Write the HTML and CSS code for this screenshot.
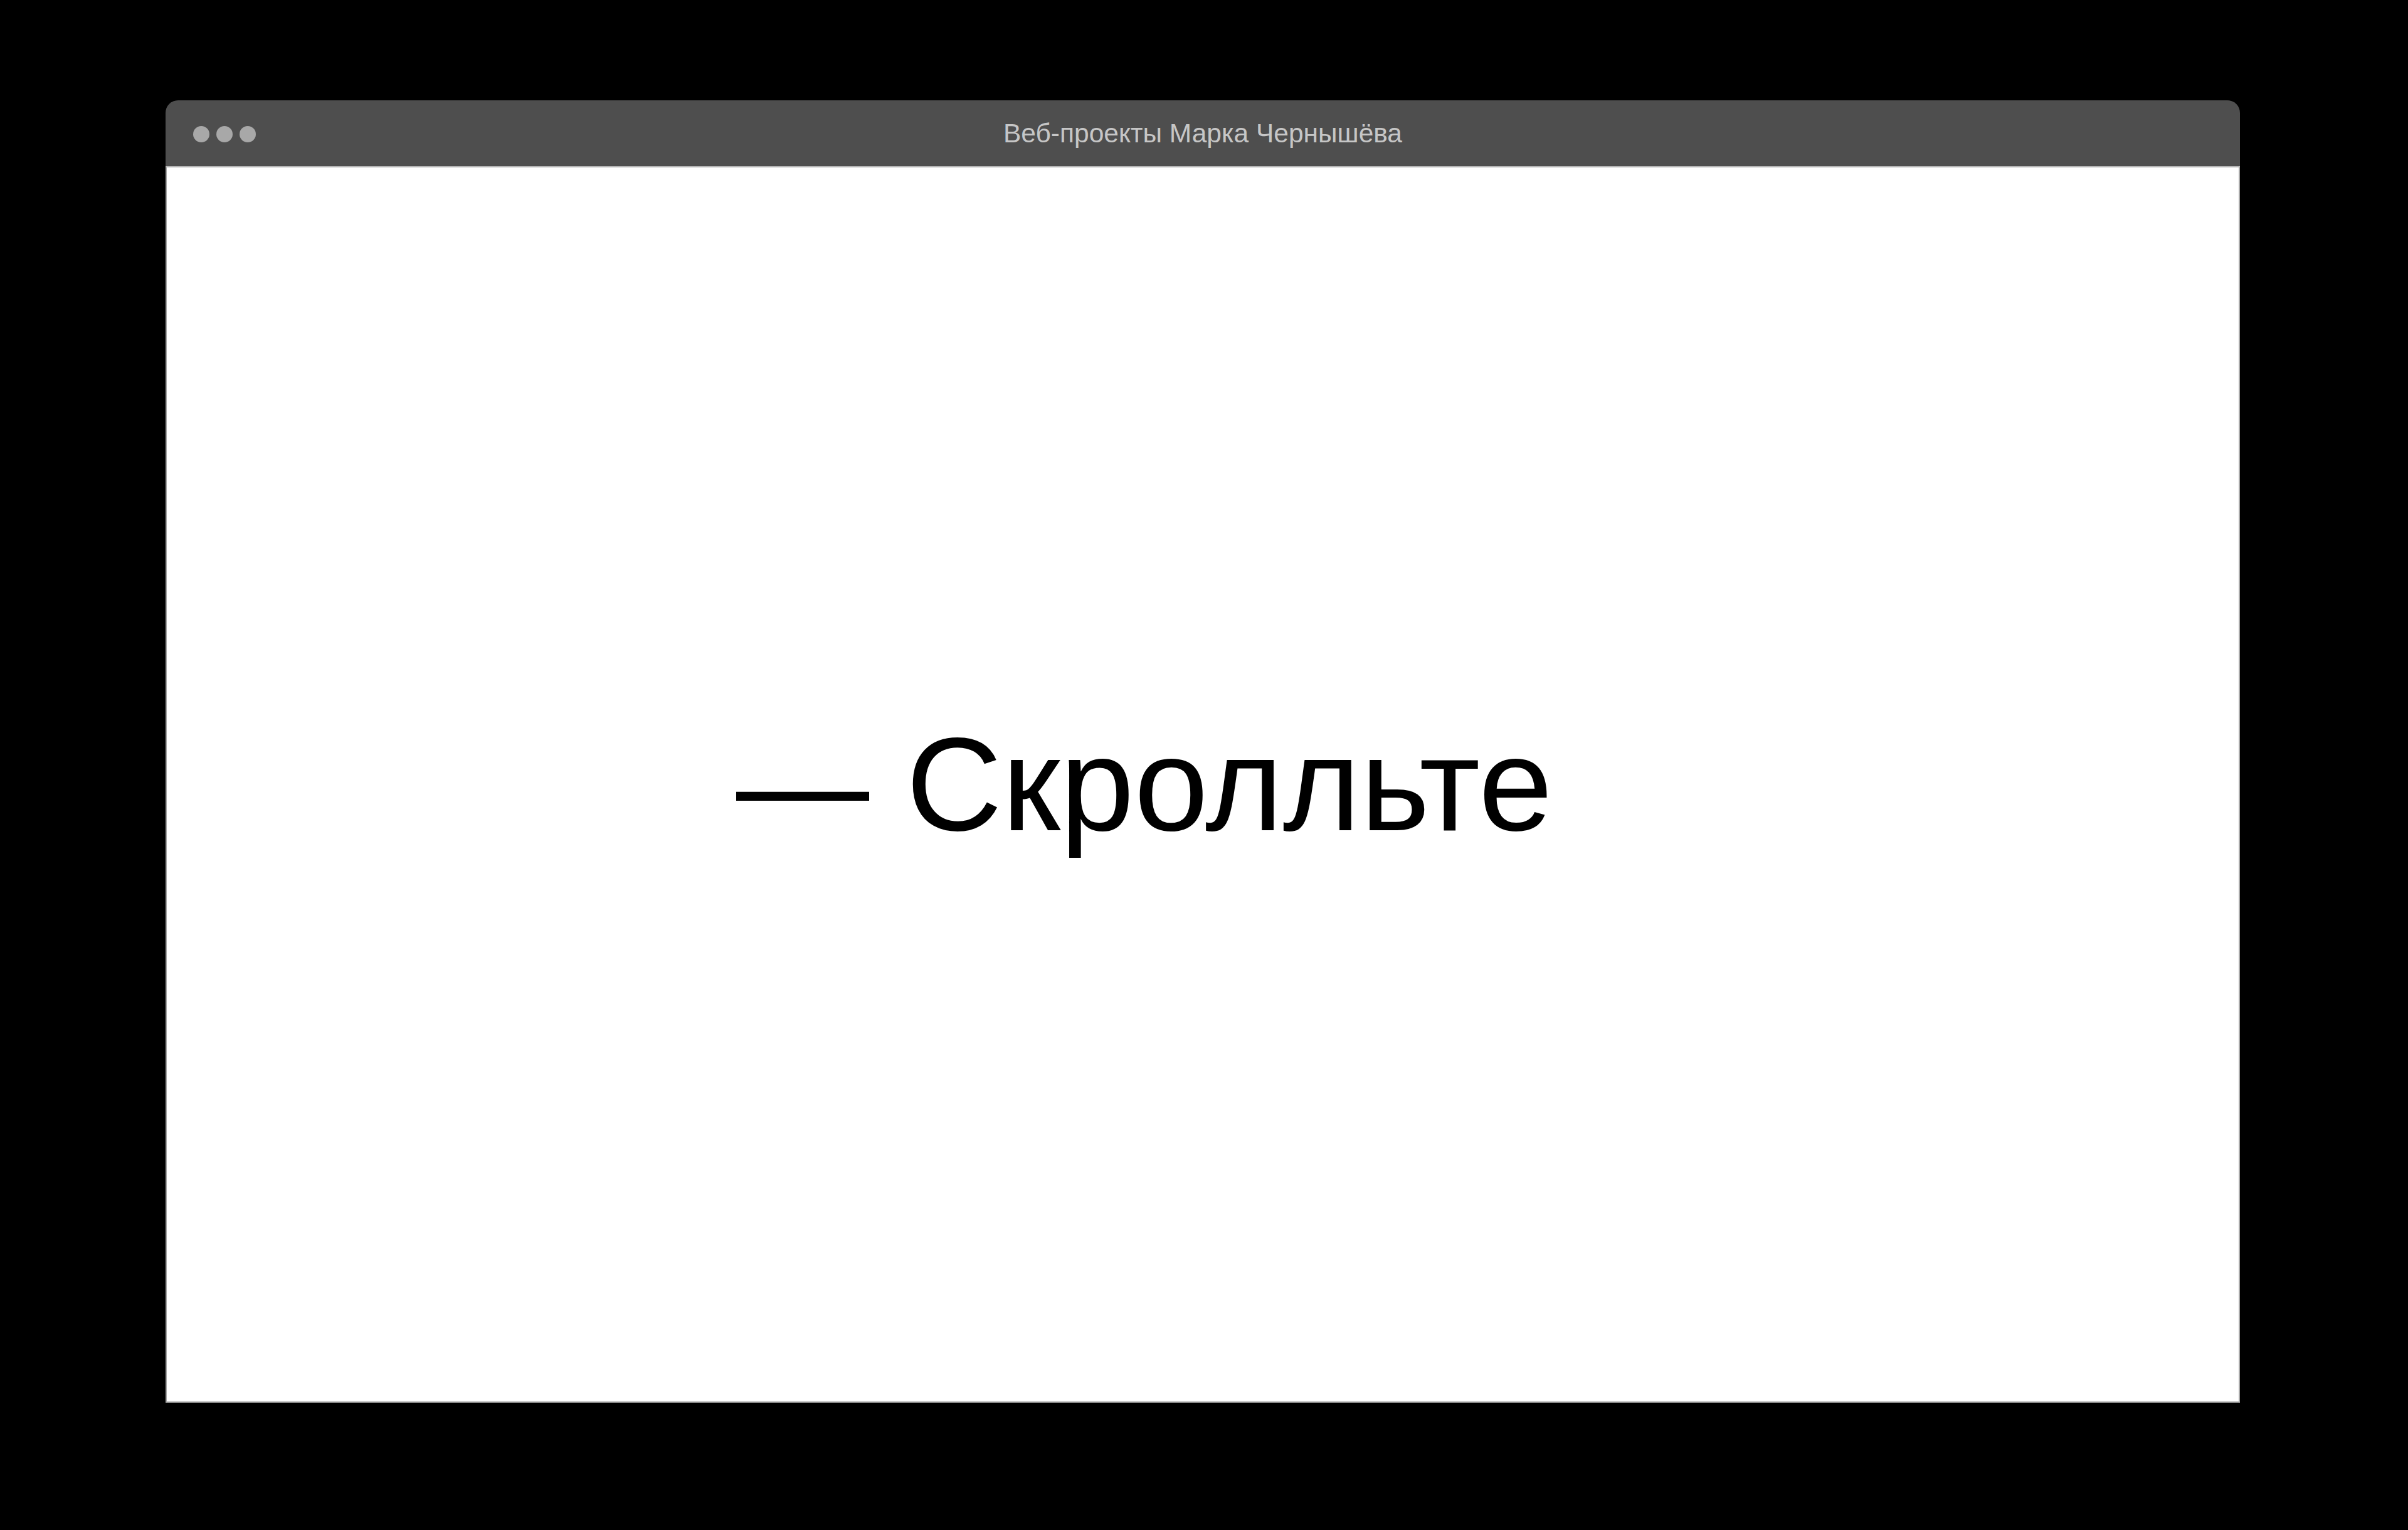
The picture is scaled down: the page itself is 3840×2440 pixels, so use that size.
FILE: index.html
```html
<!DOCTYPE html>
<html lang="ru">
<head>
    <meta charset="UTF-8">
    <meta name="viewport" content="width=device-width, initial-scale=1.0">
    <title>Веб-проекты Марка Чернышёва</title>
    <link rel="stylesheet" href="styles.css">
</head>
<body>
    <div class="page">
        <div class="window">
            <div class="titlebar">
                <div class="dots">
                    <span class="dot"></span>
                    <span class="dot"></span>
                    <span class="dot"></span>
                </div>
                <div class="title">Веб-проекты Марка Чернышёва</div>
                <div></div>
            </div>
            <div class="content">
                <p class="scroll-hint">— Скролльте</p>
            </div>
        </div>
    </div>
</body>
</html>
```

FILE: styles.css
```css
html, body { margin: 0; padding: 0; background-color: #000; }
body { font-family: "Liberation Sans", Arial, sans-serif; }
.page { padding: 160px 268px 203px 264px; }
.window { display: flex; flex-direction: column; height: 2077px; }
.titlebar {
    display: grid;
    grid-template-columns: 1fr auto 1fr;
    align-items: center;
    height: 105px;
    padding: 0 44px;
    background-color: #4e4e4e;
    border-radius: 20px 20px 0 0;
    border-bottom: 2px solid #b4b4b4;
}
.dots { display: flex; gap: 11px; padding-top: 2px; }
.dot { width: 26px; height: 26px; border-radius: 50%; background-color: #a8a8a8; }
.title { color: #c6c6c6; font-size: 42.5px; line-height: 1; padding-top: 1px; }
.content {
    flex: 1;
    display: flex;
    align-items: center;
    justify-content: center;
    padding-right: 186px;
    background-color: #fff;
    border: 2px solid #a6a6a6;
    border-top: none;
}
.scroll-hint { margin: 0; font-size: 212px; line-height: 1; color: #000; }
```
